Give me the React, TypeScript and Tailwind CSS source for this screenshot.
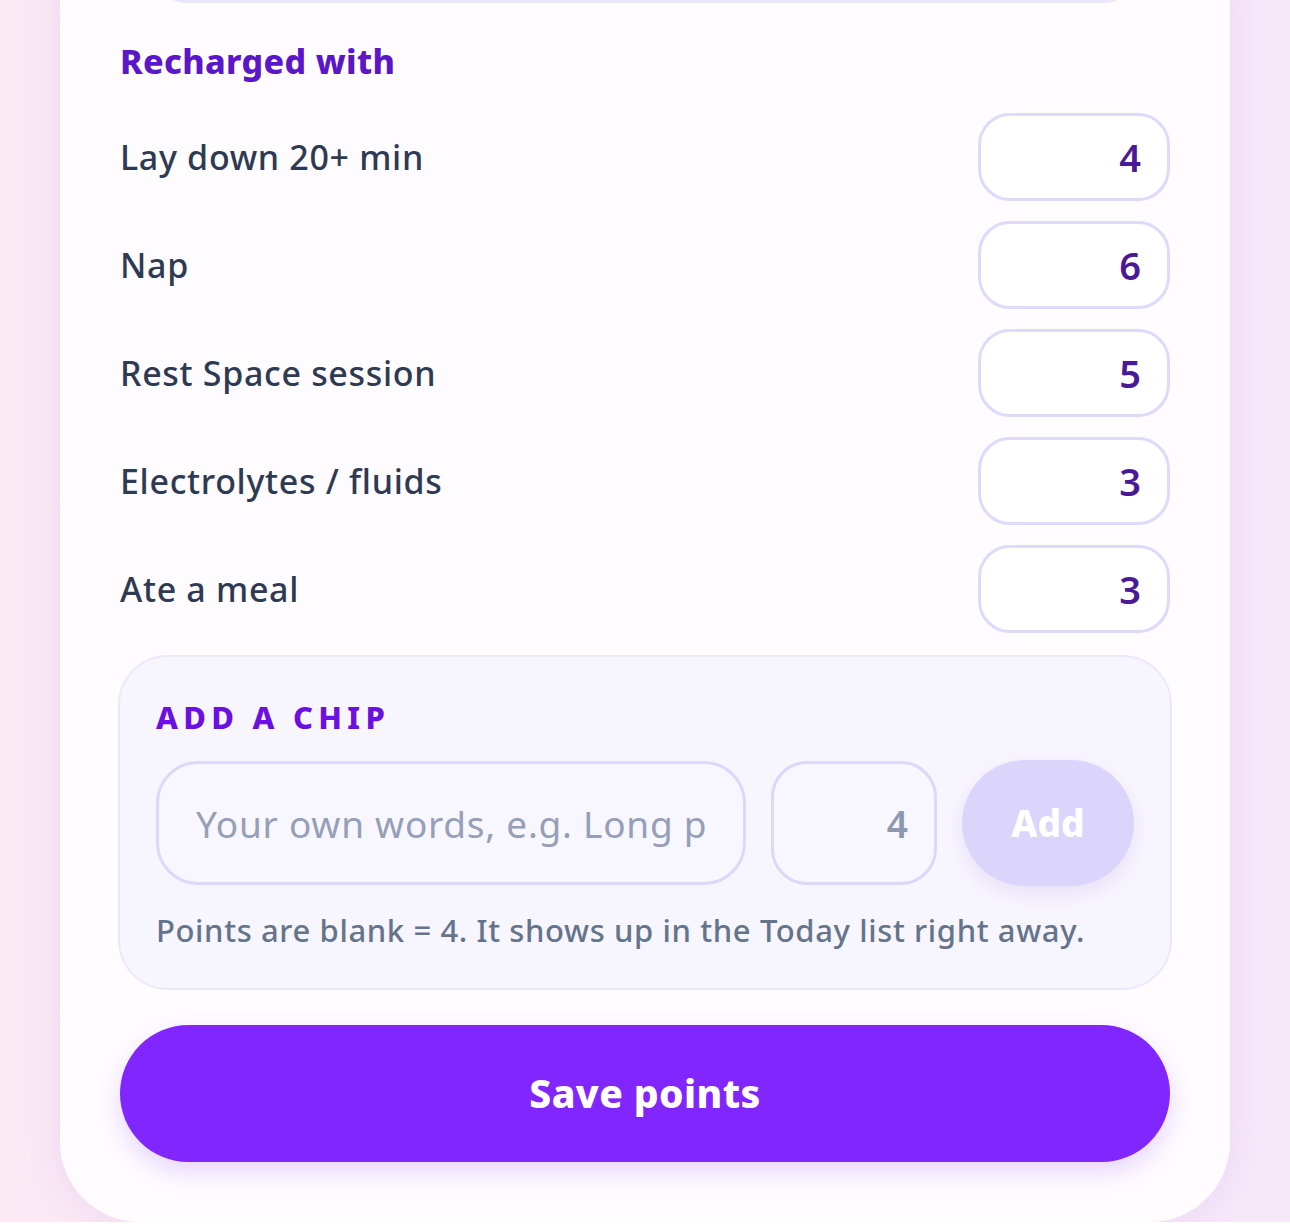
import { useState } from "react";

const font = { fontFamily: '"Noto Sans", "Open Sans", sans-serif' };

const chips = [
  { label: "Lay down 20+ min", value: 4 },
  { label: "Nap", value: 6 },
  { label: "Rest Space session", value: 5 },
  { label: "Electrolytes / fluids", value: 3 },
  { label: "Ate a meal", value: 3 },
];

function ChipRow({ label, value }: { label: string; value: number }) {
  return (
    <div className="flex items-center justify-between">
      <span className="text-[34px] font-medium tracking-[0.02em] text-[#2e3a52]">{label}</span>
      <div className="flex h-[88px] w-[192px] items-center justify-end rounded-[32px] border-[3px] border-[#dfdafb] bg-white pr-[26px]">
        <span className="text-[38px] font-semibold text-[#4a1a96]">{value}</span>
      </div>
    </div>
  );
}

export default function App() {
  const [name, setName] = useState("");

  return (
    <div
      className="min-h-[1224px] bg-[linear-gradient(90deg,#fbe9f4,#f8e8f7_50%,#f7e8f9)] px-[60px]"
      style={font}
    >
      <div className="rounded-b-[80px] bg-[#fefcff] px-[60px] pb-[60px] shadow-[0_0_40px_rgba(190,150,235,0.22)]">
        <div className="mx-[35px] -mt-[28px] h-[31px] rounded-b-[32px] border-[3px] border-t-0 border-[#ebe7fb]" />

        <h2 className="mt-[38px] text-[34px] font-extrabold leading-[41px] tracking-[0.01em] text-[#5a16c8]">
          Recharged with
        </h2>

        <div className="mt-[31px] flex flex-col gap-[20px]">
          {chips.map((c) => (
            <ChipRow key={c.label} label={c.label} value={c.value} />
          ))}
        </div>

        <div className="-mx-[2px] mt-[22px] rounded-[50px] border-2 border-[#ece8fb] bg-[#f7f5fe] px-[36px] pb-[40px] pt-[42px]">
          <p className="text-[31px] font-extrabold uppercase leading-[36px] tracking-[0.17em] text-[#6c10e2]">
            Add a chip
          </p>

          <div className="mt-[25px] flex items-center gap-[25px]">
            <input
              className="h-[124px] min-w-0 flex-1 rounded-[42px] border-[3px] border-[#ddd8fa] bg-[#f8f7ff] px-[37px] text-[37px] tracking-[0.02em] text-[#2e3a52] outline-none placeholder:text-[#95a0b8]"
              placeholder="Your own words, e.g. Long p"
              value={name}
              onChange={(e) => setName(e.target.value)}
            />
            <input
              className="h-[124px] w-[166px] rounded-[36px] border-[3px] border-[#ddd8fa] bg-[#f8f7ff] px-[26px] text-right text-[37px] font-semibold text-[#4a1a96] outline-none placeholder:text-[#8c98b2]"
              placeholder="4"
            />
            <button className="h-[126px] w-[172px] rounded-full bg-[#dcd5fb] text-[37px] font-extrabold text-white shadow-[0_8px_18px_rgba(160,140,220,0.18)]">
              Add
            </button>
          </div>

          <p className="mt-[26px] text-[31px] font-medium leading-[36px] tracking-[0.02em] text-[#64748b]">
            Points are blank = 4. It shows up in the Today list right away.
          </p>
        </div>

        <button className="mt-[35px] h-[137px] w-full rounded-full bg-[#8226ff] text-[39px] font-extrabold tracking-[0.01em] text-white shadow-[0_10px_24px_rgba(130,40,255,0.18)]">
          Save points
        </button>
      </div>
    </div>
  );
}
